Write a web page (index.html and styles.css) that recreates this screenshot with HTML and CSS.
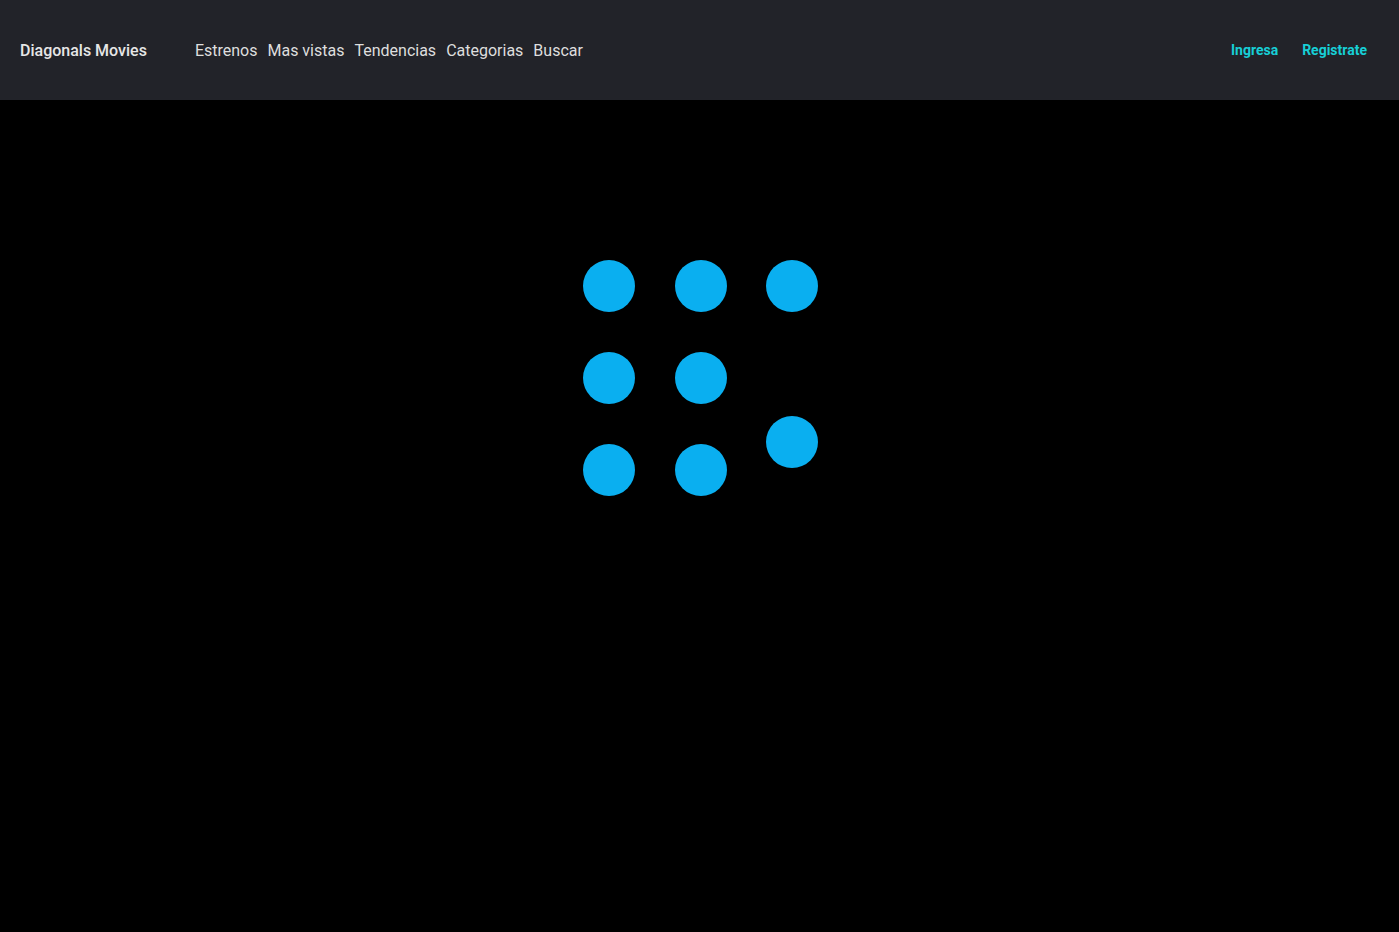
FILE: index.html
```html
<!DOCTYPE html>
<html lang="es">
<head>
<meta charset="utf-8">
<title>Diagonals Movies</title>
<link rel="stylesheet" href="styles.css">
</head>
<body>
<header class="navbar">
  <div class="nav-left">
    <a class="brand" href="#">Diagonals Movies</a>
    <nav class="nav-links">
      <a href="#">Estrenos</a>
      <a href="#">Mas vistas</a>
      <a href="#">Tendencias</a>
      <a href="#">Categorias</a>
      <a href="#">Buscar</a>
    </nav>
  </div>
  <div class="nav-right">
    <a href="#">Ingresa</a>
    <a href="#">Registrate</a>
  </div>
</header>
<main class="content">
  <div class="loader">
    <span class="dot"></span>
    <span class="dot"></span>
    <span class="dot"></span>
    <span class="dot"></span>
    <span class="dot"></span>
    <span class="dot hidden"></span>
    <span class="dot"></span>
    <span class="dot"></span>
    <span class="dot lifted"></span>
  </div>
</main>
</body>
</html>
```

FILE: styles.css
```css
* { box-sizing: border-box; }
html, body {
  margin: 0;
  padding: 0;
  height: 100%;
  background: #000;
  font-family: Roboto, "Liberation Sans", sans-serif;
}
a { text-decoration: none; }
.navbar {
  height: 100px;
  background: #222329;
  display: flex;
  align-items: center;
  justify-content: space-between;
  padding: 0 32px 0 20px;
}
.nav-left {
  display: flex;
  align-items: center;
}
.brand {
  color: #e6e6e6;
  font-size: 16px;
  font-weight: 500;
  margin-right: 48px;
}
.nav-links {
  display: flex;
  gap: 10px;
}
.nav-links a {
  color: #dedede;
  font-size: 16px;
}
.nav-right {
  display: flex;
  gap: 24px;
}
.nav-right a {
  color: #17cfd6;
  font-size: 14px;
  font-weight: 700;
}
.content {
  display: flex;
  justify-content: center;
  padding-top: 160px;
  padding-left: 3px;
}
.loader {
  display: grid;
  grid-template-columns: repeat(3, 52px);
  grid-auto-rows: 52px;
  column-gap: 40px;
  row-gap: 40px;
}
.dot {
  width: 52px;
  height: 52px;
  border-radius: 50%;
  background: #0aaff0;
}
.dot.hidden { visibility: hidden; }
.dot.lifted { transform: translateY(-28px); }
.loader .dot:nth-child(3n) { margin-left: -1px; }
```
